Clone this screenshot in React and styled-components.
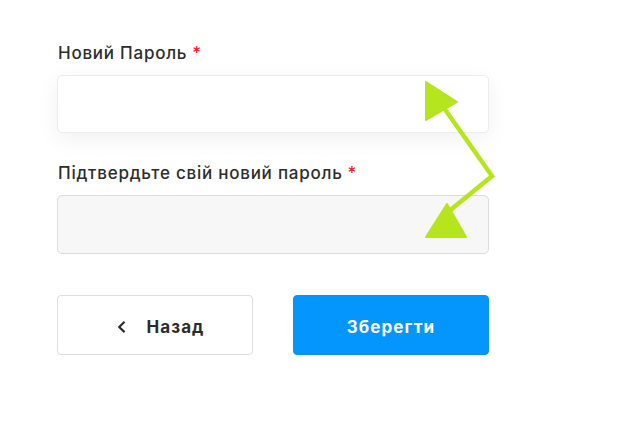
import React from "react";
import styled, { createGlobalStyle } from "styled-components";

const Global = createGlobalStyle`
  html, body { margin: 0; padding: 0; background: #fff; }
  body { font-family: "Inter", "Liberation Sans", sans-serif; color: #2b2b2b; }
`;

const Page = styled.div`
  position: relative;
  width: 622px;
  height: 429px;
  box-sizing: border-box;
  padding: 41px 0 0 57px;
`;

const Form = styled.form`
  width: 432px;
  display: flex;
  flex-direction: column;
`;

const Field = styled.div`
  display: flex;
  flex-direction: column;
  gap: 10px;
  margin-bottom: ${(p) => p.$mb}px;
`;

const Label = styled.label`
  font-size: 17px;
  line-height: 24px;
  font-weight: 500;
  color: #2d2d2d;
  padding-left: 1px;
  letter-spacing: 0.75px;
`;

const Req = styled.span`
  color: #ee1c1c;
  margin-left: 5px;
`;

const Input = styled.input`
  box-sizing: border-box;
  height: ${(p) => (p.$filled ? 59 : 58)}px;
  width: 100%;
  border-radius: 5px;
  border: 1px solid ${(p) => (p.$filled ? "#dcdcdc" : "#ececec")};
  background: ${(p) => (p.$filled ? "#f7f7f7" : "#fff")};
  box-shadow: ${(p) => (p.$filled ? "none" : "0 6px 22px rgba(0,0,0,0.06)")};
  outline: none;
`;

const Buttons = styled.div`
  display: grid;
  grid-template-columns: 196px 196px;
  column-gap: 40px;
`;

const Button = styled.button`
  box-sizing: border-box;
  height: 60px;
  border-radius: 4px;
  font-family: "Inter", "Liberation Sans", sans-serif;
  font-size: 17px;
  font-weight: 700;
  letter-spacing: 1.1px;
  display: flex;
  align-items: center;
  justify-content: center;
  gap: 20px;
  padding: 3px 0 0 ${(p) => (p.$primary ? 0 : 12)}px;
  cursor: pointer;
  border: 1px solid ${(p) => (p.$primary ? "#0a93f5" : "#dedede")};
  background: ${(p) => (p.$primary ? "#0596fd" : "#fff")};
  color: ${(p) => (p.$primary ? "#fff" : "#2b2b2b")};
`;

const Overlay = styled.svg`
  position: absolute;
  left: 0;
  top: 0;
  pointer-events: none;
`;

function Chevron() {
  return (
    <svg width="9" height="12" viewBox="0 0 9 12">
      <path d="M6.8 1.6 L2.2 6 L6.8 10.4" fill="none" stroke="#2b2b2b" strokeWidth="2.1" strokeLinecap="square" strokeLinejoin="miter" />
    </svg>
  );
}

export default function App() {
  return (
    <>
      <Global />
      <Page>
        <Form onSubmit={(e) => e.preventDefault()}>
          <Field $mb={28}>
            <Label>Новий Пароль<Req>*</Req></Label>
            <Input type="password" />
          </Field>
          <Field $mb={41}>
            <Label>Підтвердьте свій новий пароль<Req>*</Req></Label>
            <Input type="password" $filled />
          </Field>
          <Buttons>
            <Button type="button"><Chevron />Назад</Button>
            <Button type="submit" $primary>Зберегти</Button>
          </Buttons>
        </Form>
        <Overlay width="622" height="429" viewBox="0 0 622 429">
          <polygon points="426,82 457,102 426,120" fill="#b5e61d" stroke="#b5e61d" strokeWidth="2" strokeLinejoin="round" />
          <polyline points="444,108 492,176 448,212" fill="none" stroke="#b5e61d" strokeWidth="4.5" strokeLinejoin="miter" />
          <polygon points="447,204 466,237 426,237" fill="#b5e61d" stroke="#b5e61d" strokeWidth="2" strokeLinejoin="round" />
        </Overlay>
      </Page>
    </>
  );
}
